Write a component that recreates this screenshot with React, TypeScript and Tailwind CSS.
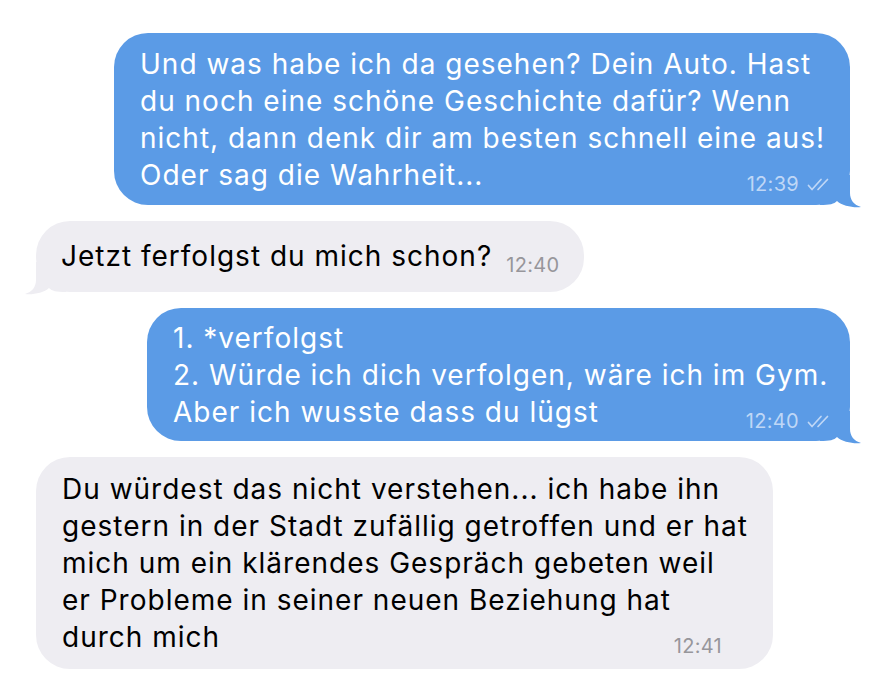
import type React from 'react'

function Tail({ side, color }: { side: 'left' | 'right'; color: string }): JSX.Element {
  const pos = side === 'right' ? 'right-[-12px] bottom-[-3px]' : 'left-[-12px] bottom-[-3px] -scale-x-100'
  return (
    <svg
      className={`absolute ${pos}`}
      width="45"
      height="35"
      viewBox="-33 -32 45 35"
    >
      <path
        d="M0,-30 L0,-12 C0,-5 4,0 11,2 C4,3 -8,1 -13,-4 C-16,-1 -20,0 -30,0 L-30,-30 Z"
        fill={color}
      />
    </svg>
  )
}

function Checks(): JSX.Element {
  return (
    <svg width="25" height="13" viewBox="0 0 25 13" fill="none" stroke="currentColor" strokeWidth="1.7" strokeLinecap="round" strokeLinejoin="round">
      <path d="M1.5,7.5 L5,11.5 L14,1.5" />
      <path d="M11,11.5 L20.5,1.5" />
    </svg>
  )
}

function Time({ value, mine }: { value: string; mine?: boolean }): JSX.Element {
  return (
    <span
      className={
        mine
          ? 'flex items-center gap-[8px] text-[20px] leading-[20px] tracking-[0.3px] text-[#bfd7f6] mb-[0px] ml-4 shrink-0'
          : 'flex items-center text-[20px] leading-[20px] tracking-[0.3px] text-[#97969b] mb-[0px] ml-[14px] shrink-0'
      }
    >
      {value}
      {mine && <Checks />}
    </span>
  )
}

type Msg = {
  mine: boolean
  lines: string[]
  time: string
  tail?: boolean
  cls: string
}

const messages: Msg[] = [
  {
    mine: true,
    lines: [
      'Und was habe ich da gesehen? Dein Auto. Hast',
      'du noch eine schöne Geschichte dafür? Wenn',
      'nicht, dann denk dir am besten schnell eine aus!',
      'Oder sag die Wahrheit...',
    ],
    time: '12:39',
    tail: true,
    cls: 'w-[736px] pt-[13px] pb-[11px] pl-[26px] pr-[18px]',
  },
  {
    mine: false,
    lines: ['Jetzt ferfolgst du mich schon?'],
    time: '12:40',
    tail: true,
    cls: 'w-[548px] pt-[17px] pb-[17px] pl-[25px] pr-[27px]',
  },
  {
    mine: true,
    lines: [
      '1. *verfolgst',
      '2. Würde ich dich verfolgen, wäre ich im Gym.',
      'Aber ich wusste dass du lügst',
    ],
    time: '12:40',
    tail: true,
    cls: 'w-[703px] pt-[12px] pb-[10px] pl-[26px] pr-[18px]',
  },
  {
    mine: false,
    lines: [
      'Du würdest das nicht verstehen... ich habe ihn',
      'gestern in der Stadt zufällig getroffen und er hat',
      'mich um ein klärendes Gespräch gebeten weil',
      'er Probleme in seiner neuen Beziehung hat',
      'durch mich',
    ],
    time: '12:41',
    cls: 'w-[737px] pt-[14px] pb-[13px] pl-[26px] pr-[51px]',
  },
]

function Bubble({ msg }: { msg: Msg }): JSX.Element {
  const color = msg.mine ? '#5b9be6' : '#eeedf2'
  const last = msg.lines[msg.lines.length - 1]
  const rest = msg.lines.slice(0, -1)
  return (
    <div className={msg.mine ? 'flex justify-end pr-[46px]' : 'flex justify-start pl-[36px]'}>
      <div
        className={`relative rounded-[34px] ${msg.cls} ${
          msg.mine ? 'bg-[#5b9be6] text-white' : 'bg-[#eeedf2] text-black'
        }`}
      >
        {msg.tail && <Tail side={msg.mine ? 'right' : 'left'} color={color} />}
        <div className="relative text-[28px] leading-[37px] tracking-[1px] whitespace-nowrap">
          {rest.map((l, i) => (
            <div key={i}>{l}</div>
          ))}
          <div className={msg.lines.length === 1 ? 'flex items-end' : 'flex items-end justify-between'}>
            <span>{last}</span>
            <Time value={msg.time} mine={msg.mine} />
          </div>
        </div>
      </div>
    </div>
  )
}

export default function App(): JSX.Element {
  const style: React.CSSProperties = {}
  return (
    <div
      className="w-[896px] h-[685px] bg-white overflow-hidden pt-[33px] flex flex-col gap-[16px] font-['Inter','Liberation_Sans',sans-serif]"
      style={style}
    >
      {messages.map((m, i) => (
        <Bubble key={i} msg={m} />
      ))}
    </div>
  )
}
